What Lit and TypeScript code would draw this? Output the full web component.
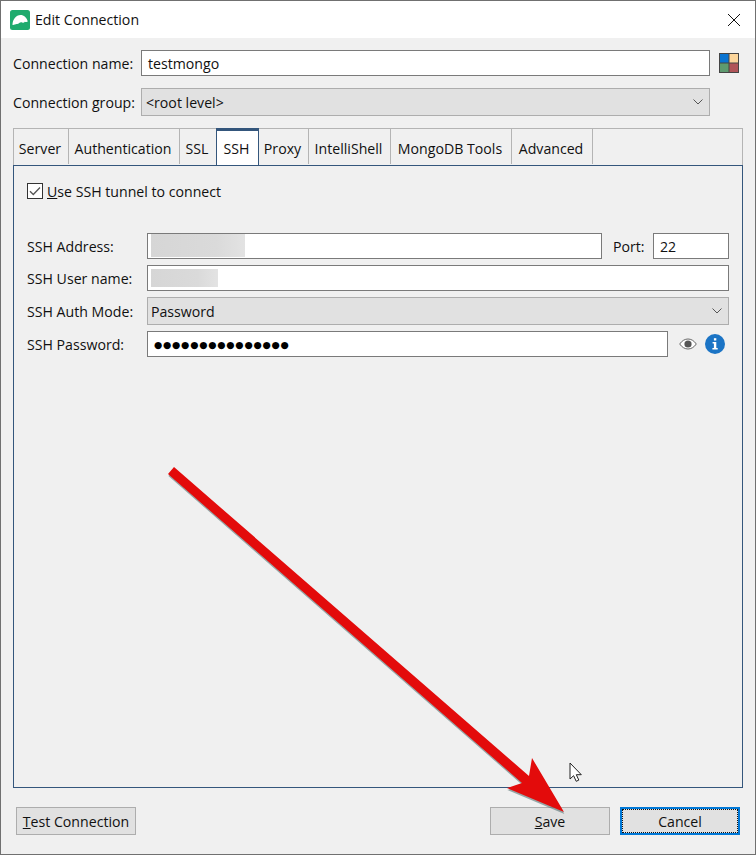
import { LitElement, html, css } from "lit";
import { customElement } from "lit/decorators.js";

const chevron = html`<svg class="chev" width="10" height="6" viewBox="0 0 10 6"><path d="M.5.5 5 5 9.5.5" fill="none" stroke="#555" stroke-width="1"/></svg>`;

@customElement("app-root")
export class AppRoot extends LitElement {
  static styles = css`
    :host { display: block; width: 756px; height: 855px; position: relative; overflow: hidden;
      font-family: "Open Sans", "Noto Sans", sans-serif; font-size: 14.15px; color: #111; background: #f0f0f0; }
    * { box-sizing: border-box; }
    .window { width: 756px; height: 855px; border: 1px solid #707070; display: flex; flex-direction: column; background: #f0f0f0; }
    .title { height: 37px; background: #fff; display: flex; align-items: center; padding-left: 9px; gap: 5px; flex: none; }
    .title .close { margin-left: auto; margin-right: 15px; display: block; }
    .body { flex: 1; display: flex; flex-direction: column; padding: 12px 12px 0; }
    .row { display: flex; align-items: center; flex: none; }
    .row .lbl { width: 128px; flex: none; }
    .input { height: 26px; background: #fff; border: 1px solid #7a7a7a; display: flex; align-items: center; padding-left: 6px; flex: 1; min-width: 0; }
    .select { height: 28px; background: #e1e1e1; border: 1px solid #adadad; display: flex; align-items: center; padding: 0 5px 0 3px; flex: 1; justify-content: space-between; min-width: 0; }
    .chev { display: block; margin-right: 1px; }
    .swatch { margin-left: 9px; margin-right: 4px; display: block; flex: none; }
    .r2 { margin-top: 12px; padding-right: 33px; }
    .r2 .select { padding-left: 4px; }
    .tabs { margin-top: 12px; height: 37px; display: flex; flex: none; border-top: 1px solid #b4b4b4; border-left: 1px solid #b4b4b4; border-right: 1px solid #b4b4b4; position: relative; }
    .tab { height: 35px; padding: 3px 2px 0 0; border-right: 1px solid #b4b4b4; display: flex; align-items: center; justify-content: center; flex: none; }
    .tab.active { height: 37px; margin-top: -1px; margin-left: -1px; margin-bottom: -1px; padding: 1px 2px 0 0; background: #fff; border-top: 3px solid #34567c; border-left: 1px solid #34567c; border-right: 1px solid #34567c; position: relative; z-index: 1; }
    .panel { height: 623px; flex: none; border: 1px solid #34567c; padding: 17px 13px 0; display: flex; flex-direction: column; }
    .check { display: flex; align-items: center; gap: 4px; height: 16px; margin-bottom: 34px; }
    .box { display: block; flex: none; }
    .form { display: grid; grid-template-columns: 120px 1fr; row-gap: 6px; align-items: center; }
    .fieldrow { display: flex; align-items: center; }
    .port-l { flex: 0 0 51px; padding-left: 11px; }
    .port { flex: 0 0 76px; padding-left: 6px; }
    .redact { background: linear-gradient(90deg, #d6d6d6, #dadada 70%, #e3e3e3); }
    .input.addr { padding-left: 3px; }
    .r-a { width: 94px; height: 23px; margin-top: -2px; }
    .r-u { width: 67px; height: 18px; }
    .dots { font-family: "DejaVu Sans", sans-serif; font-size: 9.5px; letter-spacing: 0.75px; color: #000; padding-left: 6px; }
    .eye { margin: 0 8px 0 11px; display: block; flex: none; }
    .info { display: block; flex: none; margin-right: 4px; }
    .select.auth { padding-right: 5px; }
    .footer { flex: 1; display: flex; align-items: flex-start; padding: 19px 3px 0 3px; }
    .btn { width: 120px; height: 28px; background: #e1e1e1; border: 1px solid #adadad; display: flex; align-items: center; justify-content: center; flex: none; }
    .btn.save { margin-left: auto; }
    .btn.cancel { margin-left: 10px; border: 2px solid #0078d7; outline: 1px dotted #111; outline-offset: -3px; }
    .arrow { position: absolute; left: 0; top: 0; pointer-events: none; }
  `;

  render() {
    return html`
      <div class="window">
        <div class="title">
          <svg width="20" height="20" viewBox="0 0 20 20"><rect width="20" height="20" rx="2.5" fill="#1fab6e"/><path d="M2.5 15C2.5 9.5 6 5 10.5 5c3.4 0 6.2 2.6 7.3 6.5-1 .8-2 .4-3 .2-.5 1-1.6 1.4-2.6.8-1.2-.4-2-.2-3 .5-.6.6-1.6 1-2.6 1-1 .2-2.4.6-3.6 1z" fill="#fff"/></svg>
          <span>Edit Connection</span>
          <svg class="close" width="12" height="12" viewBox="0 0 12 12"><path d="M0 0 12 12M12 0 0 12" stroke="#111" stroke-width="1"/></svg>
        </div>
        <div class="body">
          <div class="row">
            <span class="lbl">Connection name:</span>
            <div class="input">testmongo</div>
            <svg class="swatch" width="20" height="20" viewBox="0 0 20 20"><rect width="20" height="20" fill="#444"/><rect x="1" y="1" width="8.5" height="8.5" fill="#0a74d1"/><rect x="10.5" y="1" width="8.5" height="8.5" fill="#fbd59b"/><rect x="1" y="10.5" width="8.5" height="8.5" fill="#5e9a6f"/><rect x="10.5" y="10.5" width="8.5" height="8.5" fill="#b05458"/></svg>
          </div>
          <div class="row r2">
            <span class="lbl">Connection group:</span>
            <div class="select"><span>&lt;root level&gt;</span>${chevron}</div>
          </div>
          <div class="tabs">
            <div class="tab" style="width:55px">Server</div>
            <div class="tab" style="width:111px">Authentication</div>
            <div class="tab" style="width:37px">SSL</div>
            <div class="tab active" style="width:43px">SSH</div>
            <div class="tab" style="width:50px">Proxy</div>
            <div class="tab" style="width:82px">IntelliShell</div>
            <div class="tab" style="width:121px">MongoDB Tools</div>
            <div class="tab" style="width:81px">Advanced</div>
          </div>
          <div class="panel">
            <div class="check">
              <svg class="box" width="16" height="16" viewBox="0 0 16 16"><rect x=".5" y=".5" width="15" height="15" fill="#fff" stroke="#333"/><path d="M3 8.2 6.3 11.5 13 4.5" fill="none" stroke="#555" stroke-width="1.3"/></svg>
              <span><u>U</u>se SSH tunnel to connect</span>
            </div>
            <div class="form">
              <span>SSH Address:</span>
              <div class="fieldrow">
                <div class="input addr"><div class="redact r-a"></div></div>
                <span class="port-l">Port:</span>
                <div class="input port">22</div>
              </div>
              <span>SSH User name:</span>
              <div class="input addr"><div class="redact r-u"></div></div>
              <span>SSH Auth Mode:</span>
              <div class="select auth"><span>Password</span>${chevron}</div>
              <span>SSH Password:</span>
              <div class="fieldrow">
                <div class="input dots">●●●●●●●●●●●●●●●</div>
                <svg class="eye" width="18" height="12" viewBox="0 0 18 12"><path d="M.7 6C3 2.6 6 1 9 1s6 1.6 8.3 5C15 9.4 12 11 9 11S3 9.4.7 6z" fill="#fff" stroke="#666" stroke-width="1"/><circle cx="9" cy="6" r="3.6" fill="#555"/></svg>
                <svg class="info" width="20" height="20" viewBox="0 0 20 20"><circle cx="10" cy="10" r="10" fill="#1b74c5"/><rect x="8.9" y="4.2" width="2.4" height="2.3" fill="#fff"/><path d="M7.6 8h3.7v6h1.4v1.4H7.4V14h1.5V9.4H7.6z" fill="#fff"/></svg>
              </div>
            </div>
          </div>
          <div class="footer">
            <div class="btn"><span><u>T</u>est Connection</span></div>
            <div class="btn save"><span><u>S</u>ave</span></div>
            <div class="btn cancel">Cancel</div>
          </div>
        </div>
      </div>
      <svg class="arrow" width="756" height="855" viewBox="0 0 756 855">
        <path d="M169 475 523 784 508 789 565 813 533 759 530 777 175 468z" fill="#4a6a6a" opacity=".55" transform="translate(-.6 1)"/>
        <path d="M174 467 529 776 532 758 564 812 507 788 522 783 168 474z" fill="#e30b0b"/>
        <path d="M570 763v16l3.6-3.3 2.6 5.6 2.6-1.2-2.5-5.4h5z" fill="#fff" stroke="#222" stroke-width="1"/>
      </svg>
    `;
  }
}
